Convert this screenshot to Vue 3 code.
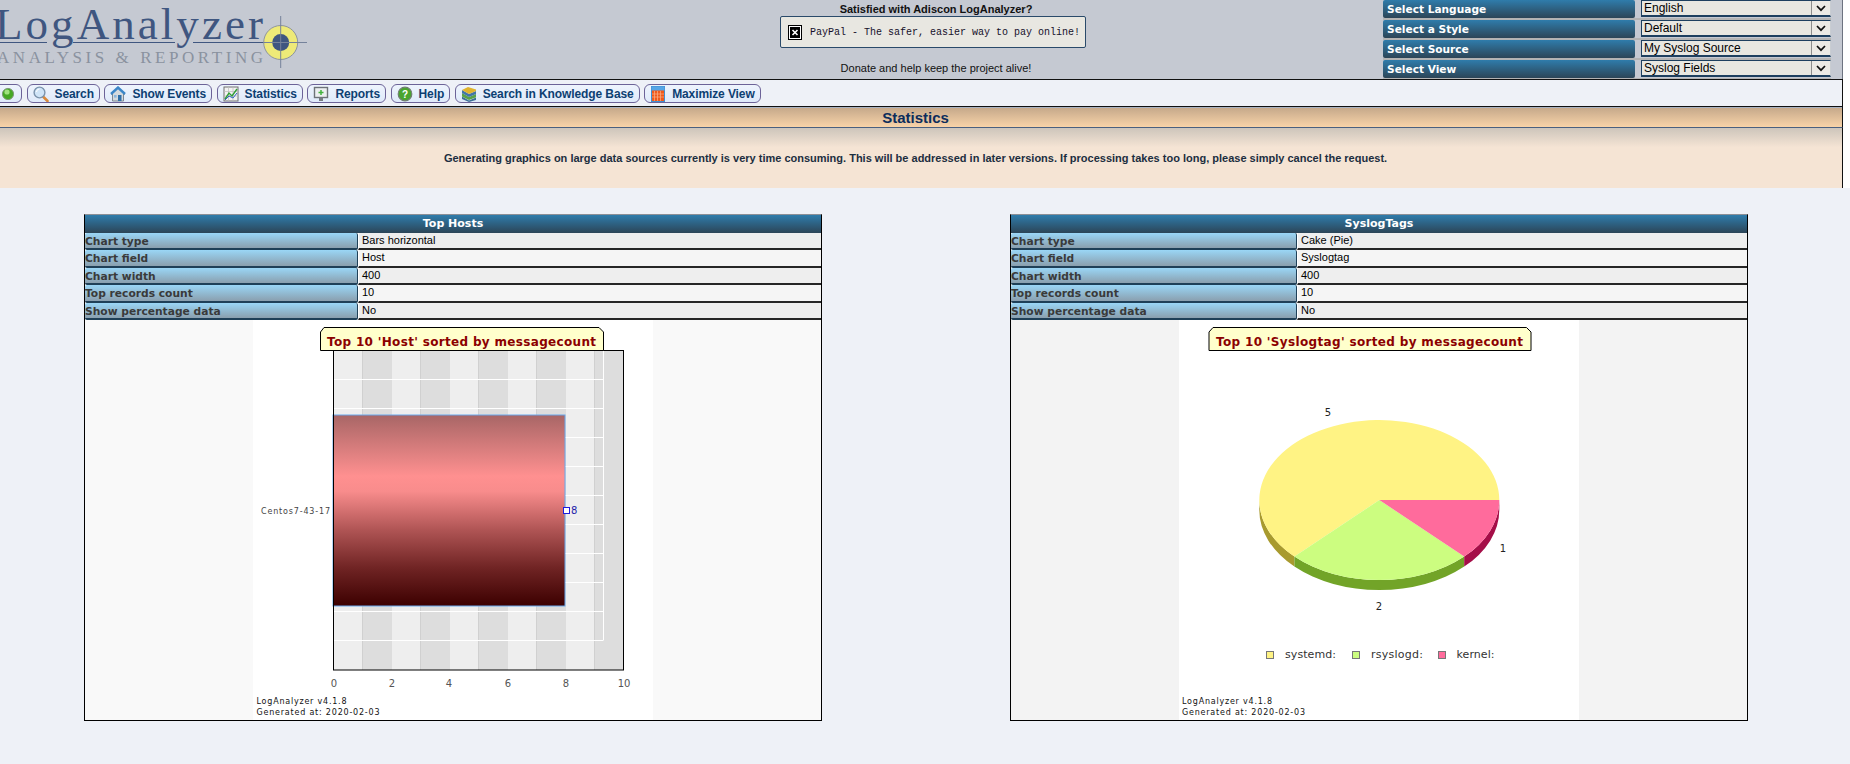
<script setup>
const selects = [
  { label: 'Select Language', value: 'English' },
  { label: 'Select a Style', value: 'Default' },
  { label: 'Select Source', value: 'My Syslog Source' },
  { label: 'Select View', value: 'Syslog Fields' }
]
const menu = [
  { key: 'orb', text: '' },
  { key: 'search', text: 'Search' },
  { key: 'home', text: 'Show Events' },
  { key: 'chart', text: 'Statistics' },
  { key: 'report', text: 'Reports' },
  { key: 'help', text: 'Help' },
  { key: 'books', text: 'Search in Knowledge Base' },
  { key: 'calc', text: 'Maximize View' }
]
const rowNames = ['Chart type', 'Chart field', 'Chart width', 'Top records count', 'Show percentage data']
const leftValues = ['Bars horizontal', 'Host', '400', '10', 'No']
const rightValues = ['Cake (Pie)', 'Syslogtag', '400', '10', 'No']
const bandX = [109, 167, 225, 283, 341]
const bandW = [30, 30, 30, 30, 30]
const hLines = [59.5, 88.5, 117.5, 146.5, 175.5, 204.5, 233.5, 262.5, 291.5, 320.5]
const ticks = [[81, '0'], [139, '2'], [196, '4'], [255, '6'], [313, '8'], [371, '10']]
</script>

<template>
  <div class="page">
    <div class="top">
      <header class="head">
        <div class="logo">
          <svg width="320" height="79" viewBox="0 0 320 79">
            <text x="-5" y="39" class="logo-main" textLength="268">LogAnalyzer</text>
            <text x="-3" y="62.7" class="logo-sub" textLength="266">ANALYSIS &amp; REPORTING</text>
            <path d="M0 42.5H47M73 42.5H175M193 42.5H264" stroke="#3f5680" stroke-width="1"/>
            <circle cx="280.7" cy="42.5" r="17" fill="#eeea78" stroke="#8d94a0"/>
            <circle cx="280.7" cy="42.5" r="8.5" fill="#3f5680"/>
            <path d="M280.7 16V68M263 42.5H307" stroke="#75829b" stroke-width="1"/>
          </svg>
        </div>
        <div class="donate">
          <div class="sat">Satisfied with Adiscon LogAnalyzer?</div>
          <div class="paypal">
            <svg width="14" height="15" viewBox="0 0 14 15">
              <rect x="0.5" y="0.5" width="13" height="14" fill="#fff" stroke="#000"/>
              <rect x="2" y="2" width="10" height="11" fill="#000"/>
              <path d="M4.5 5L9.5 10M9.5 5L4.5 10" stroke="#fff" stroke-width="1.6"/>
            </svg>
            <span class="paypal-text">PayPal - The safer, easier way to pay online!</span>
          </div>
          <div class="alive">Donate and help keep the project alive!</div>
        </div>
        <div class="pickers">
          <div v-for="s in selects" :key="s.label" class="picker">
            <div class="picker-label">{{ s.label }}</div>
            <div class="picker-box">
              <span class="picker-value">{{ s.value }}</span>
              <span class="picker-arrow">
                <svg width="10" height="7" viewBox="0 0 10 7"><path d="M1 1L5 5.2L9 1" fill="none" stroke="#111" stroke-width="1.7"/></svg>
              </span>
            </div>
          </div>
        </div>
      </header>

      <nav class="menu">
        <button v-for="m in menu" :key="m.key" class="btn" type="button">
          <svg width="16" height="16" viewBox="0 0 16 16" class="ico">
            <template v-if="m.key === 'orb'">
              <circle cx="8" cy="8" r="5.6" fill="#45a825" stroke="#7f9a7a"/>
              <circle cx="7" cy="6" r="2.6" fill="#9fe27f"/>
            </template>
            <template v-else-if="m.key === 'search'">
              <path d="M10 10.5L14.5 15" stroke="#d9893b" stroke-width="2.6" stroke-linecap="round"/>
              <circle cx="6.5" cy="6.5" r="5.4" fill="#cfe4f7" stroke="#7b93ac" stroke-width="1.4"/>
              <path d="M3.5 6a3 3 0 0 1 3-3" stroke="#fff" fill="none"/>
            </template>
            <template v-else-if="m.key === 'home'">
              <path d="M1 8L8 1.5L15 8L13.5 8V15H2.5V8Z" fill="#d5dade" stroke="#7d8791"/>
              <path d="M1 8L8 1.5L15 8" fill="none" stroke="#3b86c8" stroke-width="2.4"/>
              <rect x="8" y="9" width="3.5" height="6" fill="#2f6fa8"/>
              <rect x="4" y="9" width="2.6" height="2.6" fill="#8bb7dd"/>
            </template>
            <template v-else-if="m.key === 'chart'">
              <rect x="1" y="1" width="14" height="14" fill="#f2f2f2" stroke="#6f6f6f"/>
              <path d="M1 5.5H15M1 10H15M5.5 1V15M10 1V15" stroke="#bdbdbd" stroke-width="0.7"/>
              <path d="M2 13L6 7L9 10L14 3" fill="none" stroke="#2f9e36" stroke-width="1.4"/>
              <path d="M2 14L6 10L10 12L14 7" fill="none" stroke="#2f62c0" stroke-width="1"/>
            </template>
            <template v-else-if="m.key === 'report'">
              <rect x="1.5" y="1.5" width="13" height="10" fill="#eceff0" stroke="#6d7378" stroke-width="1.4"/>
              <rect x="6" y="11.5" width="4" height="3.5" fill="#767c80"/>
              <path d="M8 4V9M5.5 6.5H10.5" stroke="#42b23c" stroke-width="1.5"/>
            </template>
            <template v-else-if="m.key === 'help'">
              <circle cx="8" cy="8" r="6.8" fill="#4aa52e" stroke="#6f7f70" stroke-width="1.2"/>
              <text x="8" y="11.6" class="ico-q">?</text>
            </template>
            <template v-else-if="m.key === 'books'">
              <path d="M1 10.5L8 14.5L15 11.5V14L8 16L1 13Z" fill="#3c6f95"/>
              <path d="M1 7L8 11L15 8V11.2L8 14L1 10.5Z" fill="#5aa24a"/>
              <path d="M1 4L8 8L15 5V8L8 11L1 7Z" fill="#4275a8"/>
              <path d="M1 4L7 1L15 3.5V5L8 8Z" fill="#e0b32d"/>
            </template>
            <template v-else>
              <rect x="1.5" y="0.5" width="13" height="15" fill="#f0591a" stroke="#3f8fd0"/>
              <rect x="1.5" y="0.5" width="13" height="4" fill="#56a6e6"/>
              <path d="M4.5 5V15M7.5 5V15M10.5 5V15M2 8H14M2 11H14" stroke="#fbb089" stroke-width="0.7"/>
            </template>
          </svg>
          <span v-if="m.text" class="btn-text">{{ m.text }}</span>
        </button>
      </nav>

      <div class="strip"></div>
      <h1 class="title">Statistics</h1>
      <div class="notice">Generating graphics on large data sources currently is very time consuming. This will be addressed in later versions. If processing takes too long, please simply cancel the request.</div>
    </div>

    <main class="content">
      <section class="panel panel-light">
        <div class="panel-head">Top Hosts</div>
        <div v-for="(n, i) in rowNames" :key="n" class="row">
          <div class="cell-name cell-left">{{ n }}</div>
          <div class="cell-val" :class="{ alt: i % 2 === 1 }">{{ leftValues[i] }}</div>
        </div>
        <div class="chart-cell">
          <svg width="400" height="400" viewBox="0 0 400 400" class="chart">
            <defs>
              <linearGradient id="barFill" x1="0" y1="0" x2="0" y2="1">
                <stop offset="0" stop-color="#a86666"/>
                <stop offset="0.32" stop-color="#ff9090"/>
                <stop offset="0.4" stop-color="#f88c8c"/>
                <stop offset="0.6" stop-color="#b05555"/>
                <stop offset="0.8" stop-color="#702424"/>
                <stop offset="1" stop-color="#3c0000"/>
              </linearGradient>
            </defs>
            <rect x="80" y="30" width="291" height="320" fill="#eeeeee"/>
            <rect v-for="(x, i) in bandX" :key="x" :x="x" y="30" :width="bandW[i]" height="320" fill="#dddddd"/>
            <path v-for="x in bandX" :key="'e' + x" :d="`M${x + 0.5} 30V350`" stroke="#d0d0d0"/>
            <path d="M350.5 30V320" stroke="#fff"/>
            <path v-for="y in hLines" :key="y" :d="`M80 ${y}H350.5`" stroke="#fff"/>
            <rect x="80" y="95" width="232" height="191" fill="url(#barFill)" stroke="#68a8ec"/>
            <rect x="310.5" y="187.5" width="6" height="6" fill="#fff" stroke="#1c1ce0"/>
            <text x="318" y="194" class="t-val">8</text>
            <rect x="80.5" y="30.5" width="290" height="319.5" fill="none" stroke="#000"/>
            <polygon points="71,7.5 346,7.5 350.5,12 350.5,30.5 67.5,30.5 67.5,12" fill="#ffffcc" stroke="#000"/>
            <text x="74" y="26" class="t-title" textLength="269">Top 10 'Host' sorted by messagecount</text>
            <text x="8" y="194" class="t-host" textLength="69">Centos7-43-17</text>
            <text v-for="t in ticks" :key="t[1]" :x="t[0]" y="367" class="t-tick">{{ t[1] }}</text>
            <text x="3.5" y="384" class="t-foot" textLength="90">LogAnalyzer v4.1.8</text>
            <text x="3.5" y="395" class="t-foot" textLength="123">Generated at: 2020-02-03</text>
          </svg>
        </div>
      </section>

      <section class="panel panel-dark">
        <div class="panel-head">SyslogTags</div>
        <div v-for="(n, i) in rowNames" :key="n" class="row">
          <div class="cell-name cell-right">{{ n }}</div>
          <div class="cell-val" :class="{ alt: i % 2 === 1 }">{{ rightValues[i] }}</div>
        </div>
        <div class="chart-cell">
          <svg width="400" height="400" viewBox="0 0 400 400" class="chart">
            <polygon points="34,7.5 347.5,7.5 352,12 352,30.5 30,30.5 30,12" fill="#ffffcc" stroke="#000"/>
            <text x="37" y="26" class="t-title" textLength="307">Top 10 'Syslogtag' sorted by messagecount</text>
            <path d="M115.4 236.6A120 80 0 0 1 80.3 180V190A120 80 0 0 0 115.4 246.6Z" fill="#a89a2e"/>
            <path d="M285.2 236.6A120 80 0 0 1 115.4 236.6V246.6A120 80 0 0 0 285.2 246.6Z" fill="#72a428"/>
            <path d="M320.3 180A120 80 0 0 1 285.2 236.6V246.6A120 80 0 0 0 320.3 190Z" fill="#a50e48"/>
            <path d="M200.3 180L115.4 236.6A120 80 0 1 1 320.3 180Z" fill="#fff384"/>
            <path d="M200.3 180L285.2 236.6A120 80 0 0 1 115.4 236.6Z" fill="#ccfd80"/>
            <path d="M200.3 180H320.3A120 80 0 0 1 285.2 236.6Z" fill="#ff6b9c"/>
            <text x="149" y="96" class="t-lab" text-anchor="middle">5</text>
            <text x="324" y="232" class="t-lab" text-anchor="middle">1</text>
            <text x="200" y="290" class="t-lab" text-anchor="middle">2</text>
            <rect x="87.5" y="331.5" width="7" height="7" fill="#fff384" stroke="#777"/>
            <text x="106" y="338" class="t-leg" textLength="51">systemd:</text>
            <rect x="173.5" y="331.5" width="7" height="7" fill="#ccfd80" stroke="#777"/>
            <text x="192" y="338" class="t-leg" textLength="52">rsyslogd:</text>
            <rect x="259.5" y="331.5" width="7" height="7" fill="#ff6b9c" stroke="#777"/>
            <text x="277.5" y="338" class="t-leg" textLength="38">kernel:</text>
            <text x="3" y="384" class="t-foot" textLength="90">LogAnalyzer v4.1.8</text>
            <text x="3" y="395" class="t-foot" textLength="123">Generated at: 2020-02-03</text>
          </svg>
        </div>
      </section>
    </main>
  </div>
</template>

<style scoped>
.page {
  width: 1850px;
  height: 764px;
  overflow: hidden;
  background: #eef1f7;
  font-family: "Liberation Sans", Arial, sans-serif;
}
.top {
  background: #fff;
  padding-right: 7px;
}
.head {
  display: flex;
  width: 1843px;
  height: 79px;
  box-sizing: border-box;
  background: #c5c9d2;
  border-right: 1px solid #6d7380;
}
.logo {
  width: 780px;
  flex: none;
}
.logo svg {
  display: block;
}
.logo-main {
  font-family: "Liberation Serif", serif;
  font-size: 45px;
  fill: #3f5680;
}
.logo-sub {
  font-family: "Liberation Serif", serif;
  font-size: 17px;
  fill: #8a929f;
}
.donate {
  width: 306px;
  flex: none;
  display: flex;
  flex-direction: column;
  align-items: center;
  font-size: 11px;
  color: #111;
}
.sat {
  font-weight: bold;
  height: 16px;
  line-height: 18px;
  padding-left: 6px;
}
.paypal {
  width: 306px;
  height: 32px;
  box-sizing: border-box;
  display: flex;
  align-items: center;
  gap: 8px;
  padding: 0 0 0 7px;
  background: #e8e7e1;
  border: 1px solid #2a4a6a;
  border-radius: 2px;
  font-family: "Liberation Mono", monospace;
  font-size: 10px;
  color: #15102a;
}
.paypal-text {
  white-space: nowrap;
}
.alive {
  margin-top: 14px;
  line-height: 13px;
  padding-left: 6px;
}
.pickers {
  margin-left: auto;
  margin-right: 6px;
  width: 453px;
  height: 79px;
  background: linear-gradient(90deg, #b3b3b3 0, #b3b3b3 448px, #c5c9d2 448px);
  display: flex;
  flex-direction: column;
  gap: 2px;
}
.picker {
  display: flex;
  height: 18px;
  gap: 6px;
  background: #c5c9d2;
}
.picker-label {
  width: 252px;
  box-sizing: border-box;
  padding-left: 4px;
  background: linear-gradient(#2f7cab, #2c4557);
  border-radius: 2px;
  font-family: "DejaVu Sans", sans-serif;
  font-weight: bold;
  font-size: 10.6px;
  line-height: 18px;
  color: #fff;
}
.picker-box {
  width: 190px;
  height: 17px;
  box-sizing: border-box;
  display: flex;
  justify-content: space-between;
  background: #e8e7e1;
  border: 1px solid #c9cdd2;
  border-bottom: 2px solid #1d3f5f;
  border-left: 1px solid #1d3f5f;
  border-top: 1px solid #1d3f5f;
  font-size: 12px;
  line-height: 15px;
  color: #000;
  padding-left: 2px;
}
.picker-arrow {
  width: 18px;
  display: flex;
  align-items: center;
  justify-content: center;
  background: #eceae5;
  border-left: 1px solid #8d8d8d;
}
.menu {
  width: 1843px;
  height: 28px;
  box-sizing: border-box;
  display: flex;
  align-items: flex-start;
  gap: 4.5px;
  padding: 4px 0 0 0;
  background: #eef1f7;
  border-top: 1px solid #111;
  border-bottom: 1px solid #111;
  border-right: 1px solid #111;
}
.btn {
  height: 19px;
  box-sizing: border-box;
  display: flex;
  align-items: center;
  gap: 6px;
  padding: 0 5px 0 5px;
  background: linear-gradient(#eef4fd, #dfeafa);
  border: 1px solid #6c6398;
  border-radius: 6px;
  font-family: "Liberation Sans", Arial, sans-serif;
  font-size: 12px;
  letter-spacing: -0.1px;
  color: #0d3f72;
  font-weight: bold;
}
.btn:first-child {
  margin-left: -6px;
}
.ico {
  flex: none;
}
.ico-q {
  font-family: "Liberation Sans", sans-serif;
  font-size: 10px;
  font-weight: bold;
  fill: #fff;
  text-anchor: middle;
}
.strip {
  width: 1843px;
  height: 1px;
  background: #a9b2c0;
  box-sizing: border-box;
  border-right: 1px solid #111;
}
.title {
  width: 1843px;
  height: 20px;
  margin: 0;
  box-sizing: border-box;
  padding-right: 11px;
  text-align: center;
  font-size: 15px;
  font-weight: bold;
  line-height: 19px;
  color: #0c2d5c;
  background: linear-gradient(#c6a98b, #f8d3a8);
  border-bottom: 1px solid #4a6080;
  border-right: 1px solid #111;
}
.notice {
  width: 1843px;
  height: 60px;
  box-sizing: border-box;
  padding: 23px 11px 0 0;
  text-align: center;
  font-size: 11px;
  font-weight: bold;
  line-height: 14px;
  color: #1c2e40;
  background: linear-gradient(#cdc5bb, #f5e4d4 32%);
  border-right: 1px solid #111;
}
.content {
  display: flex;
  gap: 188px;
  padding: 26px 0 0 84px;
}
.panel {
  width: 738px;
  border: 1px solid #000;
  border-top: 1px solid #8b8f96;
  box-sizing: border-box;
}
.panel-light {
  background: #f9f9f9;
}
.panel-dark {
  background: #f3f3f3;
}
.panel-head {
  height: 18px;
  text-align: center;
  font-family: "DejaVu Sans", sans-serif;
  font-weight: bold;
  font-size: 11px;
  line-height: 18px;
  color: #fff;
  background: linear-gradient(#2f7cab, #2c4557);
}
.row {
  display: flex;
  height: 17.4px;
}
.cell-name {
  flex: none;
  box-sizing: border-box;
  font-family: "DejaVu Sans", sans-serif;
  font-weight: bold;
  font-size: 10.7px;
  line-height: 17px;
  color: #3a3a3a;
  background: linear-gradient(#9ad6f6, #8a9fae);
  border-bottom: 2px solid #1f4058;
  border-right: 1px solid #1f4058;
  border-radius: 2px;
}
.cell-left {
  width: 273px;
}
.cell-right {
  width: 286px;
}
.cell-val {
  flex: 1;
  box-sizing: border-box;
  padding-left: 3px;
  font-size: 11px;
  line-height: 14px;
  color: #000;
  background: #eeeeee;
  border-bottom: 2px solid #262626;
  border-left: 1px solid #fff;
}
.cell-val.alt {
  background: #f5f5f5;
}
.chart-cell {
  display: flex;
  justify-content: center;
}
.chart {
  display: block;
  background: #fff;
}
.t-title {
  font-family: "DejaVu Sans", sans-serif;
  font-size: 12px;
  font-weight: bold;
  fill: #8b0000;
}
.t-host {
  font-family: "DejaVu Sans", sans-serif;
  font-size: 8px;
  fill: #444;
}
.t-val {
  font-family: "DejaVu Sans", sans-serif;
  font-size: 10px;
  fill: #2222aa;
}
.t-tick {
  font-family: "DejaVu Sans", sans-serif;
  font-size: 10px;
  fill: #555;
  text-anchor: middle;
}
.t-foot {
  font-family: "DejaVu Sans", sans-serif;
  font-size: 8px;
  fill: #111;
}
.t-lab {
  font-family: "DejaVu Sans", sans-serif;
  font-size: 10px;
  fill: #222;
}
.t-leg {
  font-family: "DejaVu Sans", sans-serif;
  font-size: 11px;
  fill: #333;
}
</style>
